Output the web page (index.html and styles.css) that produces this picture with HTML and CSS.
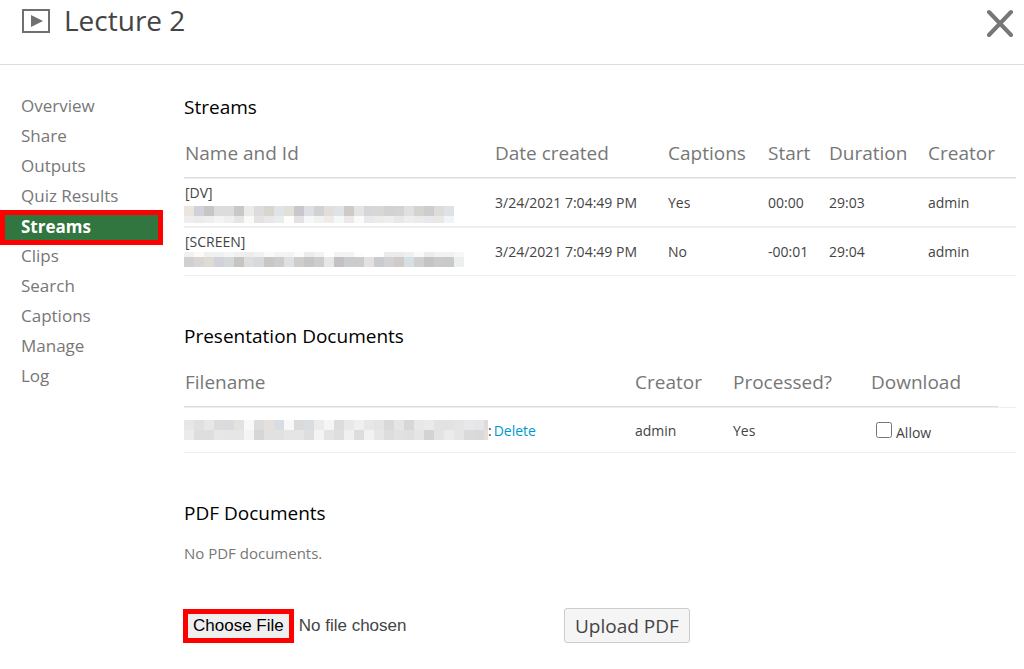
FILE: index.html
```html
<!DOCTYPE html>
<html lang="en">
<head>
    <meta charset="UTF-8">
    <meta name="viewport" content="width=device-width, initial-scale=1.0">
    <title>Lecture 2</title>
    <link rel="stylesheet" href="styles.css">
</head>
<body>
    <header class="top-bar">
        <svg class="video-icon" width="28" height="24" viewBox="0 0 28 24" aria-hidden="true">
            <rect x="1" y="1" width="26" height="22" fill="none" stroke="#707070" stroke-width="2"/>
            <path d="M9 6v12l12-6z" fill="#707070"/>
        </svg>
        <h1>Lecture 2</h1>
        <button type="button" class="close-button" aria-label="Close">
            <svg width="28" height="28" viewBox="0 0 28 28" aria-hidden="true">
                <path d="M3 3l22 23M25 3L3 26" stroke="#777" stroke-width="4" stroke-linecap="round"/>
            </svg>
        </button>
    </header>

    <div class="layout">
        <nav class="side-nav">
            <a href="#overview">Overview</a>
            <a href="#share">Share</a>
            <a href="#outputs">Outputs</a>
            <a href="#quiz">Quiz Results</a>
            <a href="#streams" class="active" aria-current="page">Streams</a>
            <a href="#clips">Clips</a>
            <a href="#search">Search</a>
            <a href="#captions">Captions</a>
            <a href="#manage">Manage</a>
            <a href="#log">Log</a>
        </nav>

        <main class="content">
            <section>
                <h2>Streams</h2>
                <table class="streams-table">
                    <colgroup>
                        <col class="col-name">
                        <col class="col-date">
                        <col class="col-captions">
                        <col class="col-start">
                        <col class="col-duration">
                        <col>
                    </colgroup>
                    <thead>
                        <tr>
                            <th>Name and Id</th>
                            <th>Date created</th>
                            <th>Captions</th>
                            <th>Start</th>
                            <th>Duration</th>
                            <th>Creator</th>
                        </tr>
                    </thead>
                    <tbody>
                        <tr>
                            <td class="name-cell">[DV]<svg class="redacted spaced" id="dv-id" width="270" height="17"></svg></td>
                            <td>3/24/2021 7:04:49 PM</td>
                            <td>Yes</td>
                            <td>00:00</td>
                            <td>29:03</td>
                            <td>admin</td>
                        </tr>
                        <tr>
                            <td class="name-cell">[SCREEN]<svg class="redacted" id="screen-id" width="280" height="15"></svg></td>
                            <td>3/24/2021 7:04:49 PM</td>
                            <td>No</td>
                            <td>-00:01</td>
                            <td>29:04</td>
                            <td>admin</td>
                        </tr>
                    </tbody>
                </table>
            </section>

            <section>
                <h2>Presentation Documents</h2>
                <table class="docs-table">
                    <colgroup>
                        <col class="col-file">
                        <col class="col-creator">
                        <col class="col-processed">
                        <col>
                        <col class="col-end">
                    </colgroup>
                    <thead>
                        <tr>
                            <th>Filename</th>
                            <th>Creator</th>
                            <th>Processed?</th>
                            <th>Download</th>
                        </tr>
                    </thead>
                    <tbody>
                        <tr>
                            <td>
                                <div class="file-cell">
                                    <svg class="redacted" id="file-name" width="304" height="20"></svg>
                                    <span>:</span>
                                    <a href="#delete">Delete</a>
                                </div>
                            </td>
                            <td>admin</td>
                            <td>Yes</td>
                            <td>
                                <div class="allow">
                                    <input type="checkbox" id="allow-download">
                                    <label for="allow-download">Allow</label>
                                </div>
                            </td>
                            <td></td>
                        </tr>
                    </tbody>
                </table>
            </section>

            <section>
                <h2>PDF Documents</h2>
                <p class="empty">No PDF documents.</p>
                <form class="upload-form">
                    <input type="file" class="file-input" aria-label="PDF file">
                    <button type="button" class="upload-button">Upload PDF</button>
                </form>
            </section>
        </main>
    </div>

    <script src="script.js"></script>
</body>
</html>
```
FILE: styles.css
```css
* {
    box-sizing: border-box;
}
body {
    margin: 0;
    font-family: "Open Sans", "Noto Sans", sans-serif;
    font-size: 14px;
    color: #444;
    background: #fff;
}
h1, h2, p {
    margin: 0;
    font-weight: 400;
}
.top-bar {
    display: flex;
    align-items: flex-start;
    height: 65px;
    padding: 9px 10px 0 22px;
    border-bottom: 1px solid #ddd;
}
h1 {
    margin-left: 14px;
    font-size: 28px;
    line-height: 22px;
}
.close-button {
    margin-left: auto;
    padding: 0;
    border: none;
    background: none;
    cursor: pointer;
}
.close-button svg {
    display: block;
}
.layout {
    display: flex;
    padding-right: 8px;
}
.side-nav {
    display: flex;
    flex-direction: column;
    flex: none;
    width: 163px;
    margin-right: 21px;
    padding-top: 26px;
}
.side-nav a {
    padding-left: 21px;
    font-size: 17px;
    line-height: 30px;
    color: #777;
    text-decoration: none;
}
.side-nav .active {
    margin: -1px 0 -4px;
    padding-left: 16px;
    border: 5px solid #f00;
    background: #31753f;
    color: #fff;
    font-weight: 700;
    line-height: 23px;
    padding-bottom: 2px;
}
.content {
    flex: 1;
    min-width: 0;
    padding-top: 29px;
}
h2 {
    margin-bottom: 10px;
    font-size: 19px;
    line-height: 26px;
    color: #000;
}
section + section {
    margin-top: 47px;
}
table {
    width: 100%;
    table-layout: fixed;
    border-collapse: separate;
    border-spacing: 0;
}
th, td {
    padding: 0 1px;
    text-align: left;
    white-space: nowrap;
}
th {
    height: 48px;
    padding-bottom: 2px;
    border-bottom: 1px solid #ddd;
    font-size: 19px;
    font-weight: 400;
    color: #777;
}
td {
    border-top: 1px solid #eee;
    border-bottom: 1px solid #eee;
}
.streams-table td {
    height: 49px;
}
.docs-table td {
    height: 46px;
}
.col-name {
    width: 310px;
}
.col-date {
    width: 173px;
}
.col-captions {
    width: 100px;
}
.col-start {
    width: 61px;
}
.col-duration {
    width: 99px;
}
.col-file {
    width: 450px;
}
.col-creator {
    width: 98px;
}
.col-processed {
    width: 138px;
}
.col-end {
    width: 18px;
}
.name-cell {
    padding-top: 4px;
    line-height: 20px;
    vertical-align: top;
}
.redacted {
    display: block;
    flex: none;
    margin-left: -1px;
    shape-rendering: crispEdges;
}
.redacted.spaced {
    margin-top: 3px;
}
.file-cell {
    display: flex;
    align-items: center;
}
.file-cell a {
    margin-left: 2px;
    color: #0099cc;
    text-decoration: none;
}
.allow {
    display: flex;
    align-items: center;
    gap: 4px;
    padding-left: 5px;
}
.allow input {
    width: 16px;
    height: 16px;
    margin: 0;
}
.allow label {
    padding-top: 4px;
}
.empty {
    padding-top: 7px;
    font-size: 15px;
    line-height: 20px;
    color: #777;
}
.upload-form {
    display: flex;
    align-items: center;
    margin-top: 45px;
    margin-left: -1px;
}
.file-input {
    width: 381px;
    font-family: "Liberation Sans", sans-serif;
    font-size: 17px;
    color: #444;
}
.file-input::file-selector-button {
    height: 34px;
    margin: 0 5px 0 0;
    padding: 0 5px;
    border: 5px solid #f00;
    background: #efefef;
    font-family: inherit;
    font-size: 17px;
    color: #000;
}
.upload-button {
    height: 35px;
    padding: 0 10px;
    border: 1px solid #ccc;
    border-radius: 3px;
    background: #f5f5f5;
    font-family: inherit;
    font-size: 19px;
    color: #444;
}
```
FILE: script.js
```js
// Coarse blocks drawn over private names, one list of colours per row
const blocks = {
    'dv-id': [
        { height: 10, colors: 'eae5df cfd2d9 c6c6c6 dcdcdc dcdcdc c8c8c9 ebebea dbdcdb d9d6d0 dfe4e9 e3e0da c9c7cb dddfe5 d2d2d3 e2dedc dfe3e6 cecac8 e4e4e4 d5d6d8 d8d7d5 d1d3d2 d3d3d5 e0e0e0 d4d3d0 cdcdce dddcda dfe2e5' },
        { height: 7, colors: 'eeeeec ebebeb eeeeef f4f4f3 efefee e5e5e5 fafaf8 e3e3e3 e8e8e7 ebecee fefefc e4e2e5 f6f8f8 f0f1f1 eeecea f4f8f8 ebe9e9 fafaf8 e9e8ea ebeceb eeeeed e8e8e9 eeeeee ebebeb e9e8ea e8e8e7 f2f3f4' }
    ],
    'screen-id': [
        { height: 5, colors: 'f1f1f1 fbfaf8 eff0f0 eff0f1 f5f5f5 f0f0f0 ededec f0f1f1 fafaf9 f4f4f3 f3f3f3 fbfbfa ececec f2f2f2 fefefe f3f3f2 f3f3f3 fcfdfe ffffff fefefe eaebec ebebeb f0f0f0 fbfafa ececec f2f2f3 f2f2f2 f6f7f9' },
        { height: 10, colors: 'd0d0d0 d8d5d4 dedbd4 d0d3d9 d4d8d9 c6c5c4 dbdddf d7dadc c9c6c6 cccccb dee0e2 cecdcc c6c6c6 cccdce e5e8e7 c3c1c3 cbcccd cccccf e3e2e0 cacbce d2d2d3 d0cbc8 d6dfe3 d0d0d0 c4c4c7 cbcac9 c8c9c9 eceef0' }
    ],
    'file-name': [
        { height: 10, colors: 'e7e7e6 e0e0e0 e7e7e6 dcdcdc dadcdb e2e2df f7faf9 dcdcdc e3e0dd d9dce2 f9f8f8 dadada d9dde0 ebebeb f6f5f3 dcdcdc e8e8e8 efefef e7e7e7 e4e4e4 dad8db e5e5e5 d8d6d9 e8e8e9 ebe9ec e2e2e2 e2e2e3 e4e4e5 e8e8eb e5e6e9 dfdadb' },
        { height: 10, colors: 'ebebeb dedede dedede e7e7e7 e5e6e7 e6e6e7 f4f4f4 d7d5d5 e1e1e1 e1e1e1 e5e5e5 e4e5e6 dedede f4f4f4 e3e3e3 dedede f2f0ee dddde0 f1f2f4 e6e6e6 dddddd e1e1e1 dfdfdf e5e5e7 d4d3d3 e3e3e3 ebebea e5e5e5 dbd9dc dad9da e4dedf' }
    ]
};

Object.keys(blocks).forEach(id => {
    const svg = document.getElementById(id);
    let y = 0;
    blocks[id].forEach(row => {
        row.colors.split(' ').forEach((color, i) => {
            const rect = document.createElementNS('http://www.w3.org/2000/svg', 'rect');
            rect.setAttribute('x', i * 10);
            rect.setAttribute('y', y);
            rect.setAttribute('width', 10);
            rect.setAttribute('height', row.height);
            rect.setAttribute('fill', '#' + color);
            svg.appendChild(rect);
        });
        y += row.height;
    });
});
```
